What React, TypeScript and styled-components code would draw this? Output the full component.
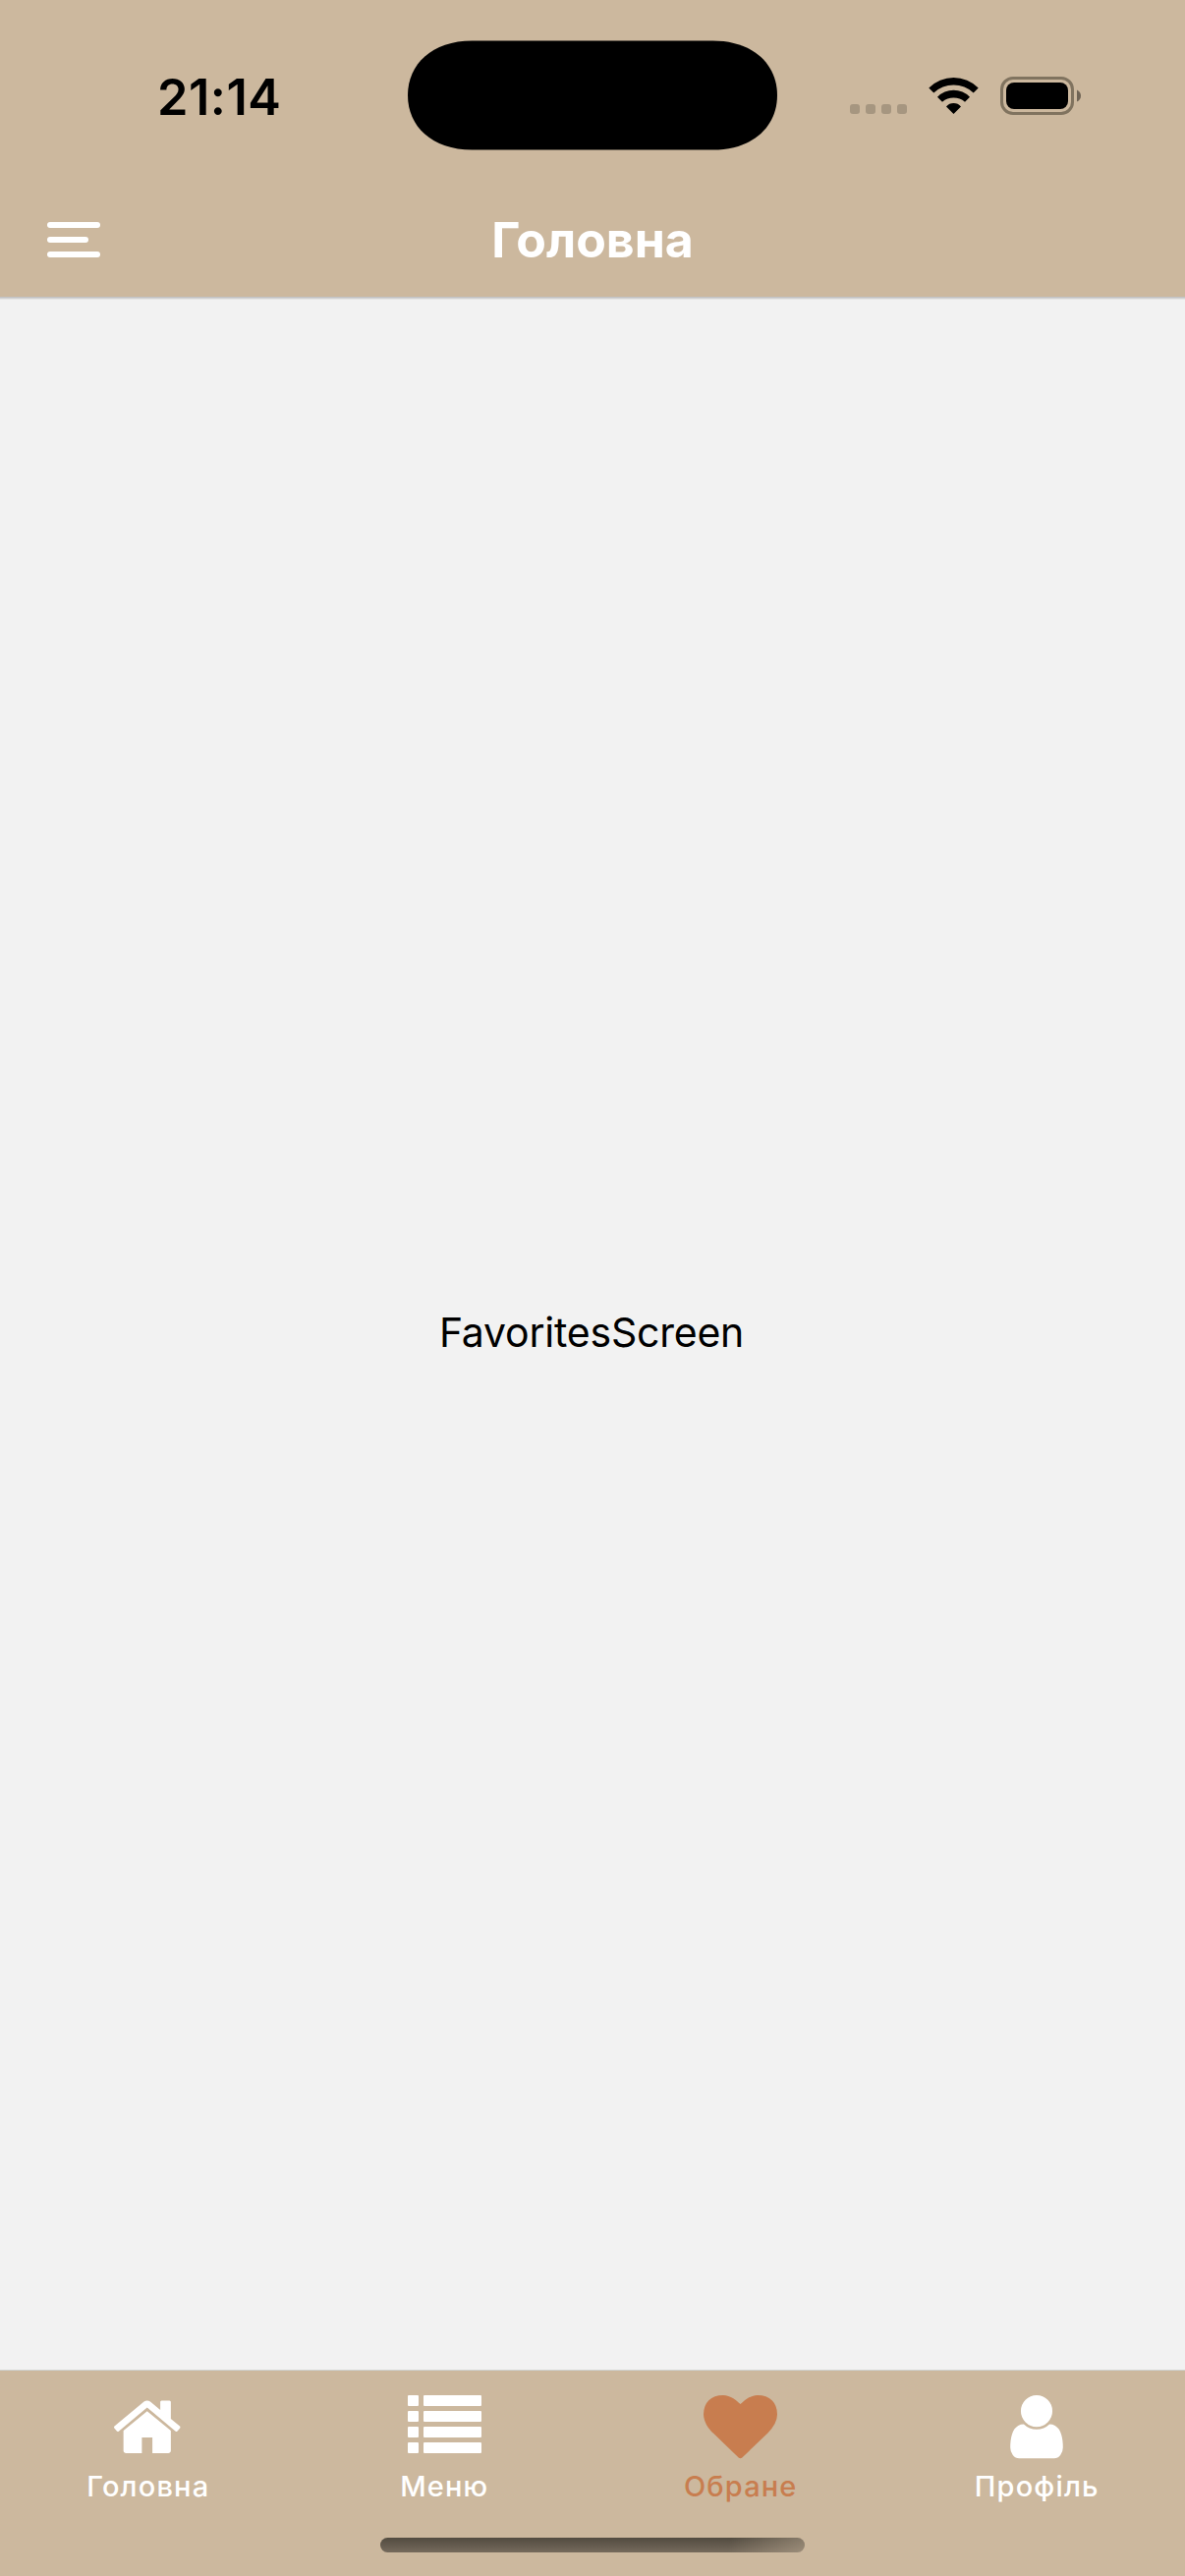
import React from 'react';
import styled, { createGlobalStyle } from 'styled-components';

const SAND = '#ccb89e';
const ACCENT = '#c87d4f';

const GlobalStyle = createGlobalStyle`
  * { box-sizing: border-box; }
  body { margin: 0; background: #f2f2f2; }
`;

const Screen = styled.div`
  display: flex;
  flex-direction: column;
  width: 1206px;
  height: 2622px;
  overflow: hidden;
  background: #f2f2f2;
  font-family: Inter, 'Liberation Sans', sans-serif;
`;

const Header = styled.header`
  flex: none;
  height: 302px;
  background: ${SAND};
  box-shadow: 0 1px 0 #c2c2c3, 0 2px 0 #d0d0d0, 0 3px 0 #e4e4e4;
`;

const StatusBar = styled.div`
  display: grid;
  grid-template-columns: 414px 378px 1fr;
  height: 186px;
  padding-top: 41px;
`;

const Clock = styled.time`
  padding: 27px 0 0 160px;
  font-size: 50.5px;
  line-height: 61px;
  font-weight: 600;
  letter-spacing: 0.5px;
  color: #000;
`;

const Island = styled.div`
  height: 112px;
`;

const Indicators = styled.div`
  padding: 37px 0 0 73px;
`;

const NavBar = styled.div`
  display: grid;
  grid-template-columns: 1fr auto 1fr;
  align-items: center;
  height: 116px;
  padding: 0 48px;
`;

const MenuButton = styled.button`
  display: flex;
  flex-direction: column;
  gap: 9px;
  width: 54px;
  padding: 0;
  border: 0;
  background: none;
`;

const MenuLine = styled.span<{ $width: number }>`
  width: ${(p) => p.$width}px;
  height: 6px;
  border-radius: 3px;
  background: #fff;
`;

const Title = styled.h1`
  margin: 0;
  font-size: 50px;
  line-height: 60px;
  font-weight: 700;
  color: #fff;
`;

const Content = styled.main`
  flex: 1;
  display: flex;
  align-items: center;
  justify-content: center;
  padding: 0 2px 2px 0;
  font-size: 41px;
  line-height: 50px;
  letter-spacing: -0.22px;
  color: #000;
`;

const Footer = styled.footer`
  flex: none;
  display: flex;
  flex-direction: column;
  align-items: center;
  height: 210px;
  border-top: 1px solid #cfd1d0;
  background: ${SAND};
`;

const Tabs = styled.nav`
  display: grid;
  grid-template-columns: repeat(4, 1fr);
  width: 100%;
  height: 170px;
`;

const Tab = styled.a<{ $active?: boolean }>`
  display: flex;
  flex-direction: column;
  align-items: center;
  padding-top: 18px;
  color: ${(p) => (p.$active ? ACCENT : '#fff')};
`;

const TabIcon = styled.svg`
  display: block;
  width: 75px;
  height: 75px;
  fill: currentColor;
`;

const TabLabel = styled.span`
  margin-top: 6px;
  font-size: 29px;
  line-height: 37px;
  font-weight: 450;
  letter-spacing: 1.15px;
  white-space: nowrap;
`;

const HomeIndicator = styled.div`
  width: 432px;
  height: 15px;
  border-radius: 7.5px;
  background: linear-gradient(100deg, transparent 82%, rgba(204, 184, 158, 0.45) 100%),
    linear-gradient(#524b40, #756a5c);
`;

const tabs = [
  {
    label: 'Головна',
    box: '-46 -43 1792 1792',
    path: 'M1408 992v480q0 26-19 45t-45 19h-384v-384h-256v384h-384q-26 0-45-19t-19-45v-480q0-1 .5-3t.5-3l575-474 575 474q1 2 1 6zm223-69l-62 74q-8 9-21 11h-3q-13 0-21-7l-692-577-692 577q-12 8-24 7-13-2-21-11l-62-74q-8-10-7-23.5t11-21.5l719-599q32-26 76-26t76 26l244 204v-195q0-14 9-23t23-9h192q14 0 23 9t9 23v408l219 182q10 8 11 21.5t-7 23.5z',
  },
  {
    label: 'Меню',
    box: '0 0 75 75',
    path: [7, 23, 39, 55]
      .map(
        (y) =>
          `M1 ${y}h9q1 0 1 1v9q0 1-1 1h-9q-1 0-1-1v-9q0-1 1-1zM17 ${y}h57q1 0 1 1v9q0 1-1 1h-57q-1 0-1-1v-9q0-1 1-1z`,
      )
      .join(''),
  },
  {
    label: 'Обране',
    active: true,
    box: '0 -39 1792 1792',
    path: 'M896 1664q-26 0-44-18l-624-602q-10-8-27.5-26t-55.5-65.5-68-97.5-53.5-121-23.5-138q0-220 127-344t351-124q62 0 126.5 21.5t120 58 95.5 68.5 76 68q36-36 76-68t95.5-68.5 120-58 126.5-21.5q224 0 351 124t127 344q0 221-229 450l-623 600q-18 18-44 18z',
  },
  {
    label: 'Профіль',
    box: '-244 -167 1792 1792',
    path: 'M1280 1271q0 109-62.5 187t-150.5 78h-854q-88 0-150.5-78t-62.5-187q0-85 8.5-160.5t31.5-152 58.5-131 94-89 134.5-34.5q131 128 313 128t313-128q76 0 134.5 34.5t94 89 58.5 131 31.5 152 8.5 160.5zm-256-887q0 159-112.5 271.5t-271.5 112.5-271.5-112.5-112.5-271.5 112.5-271.5 271.5-112.5 271.5 112.5 112.5 271.5z',
  },
];

export default function App() {
  return (
    <Screen>
      <GlobalStyle />
      <Header>
        <StatusBar>
          <Clock>21:14</Clock>
          <Island>
            <svg width="378" height="112" viewBox="-0.5 -0.5 378 112" display="block">
              <path d="M66 0H311C352 0 376.5 24 376.5 55.5S352 111 311 111H66C25 111 0.5 87 0.5 55.5S25 0 66 0z" />
            </svg>
          </Island>
          <Indicators>
            <svg width="236" height="39" viewBox="0 0 236 39" display="block">
              {[0, 16, 32, 48].map((x) => (
                <rect key={x} x={x} y="28" width="10" height="10" rx="3" fill="#a69680" />
              ))}
              <path d="M80.3 11.5a35.5 35.5 0 0 1 50.4 0l-5 5a29.5 29.5 0 0 0-40.4 0z" />
              <path d="M89 20.7a22.9 22.9 0 0 1 33 0l-5 5a17.8 17.8 0 0 0-23 0z" />
              <path d="M98 30.5a10 10 0 0 1 15 0L105.5 38z" />
              <rect x="154.5" y="1.5" width="72" height="36" rx="11.5" fill="none" stroke="#80735f" strokeWidth="3" />
              <rect x="159" y="6" width="63" height="27" rx="8" />
              <path d="M231 13.5q4 2 4 6t-4 6z" fill="#6f6455" />
            </svg>
          </Indicators>
        </StatusBar>
        <NavBar>
          <MenuButton aria-label="Меню">
            <MenuLine $width={54} />
            <MenuLine $width={42} />
            <MenuLine $width={54} />
          </MenuButton>
          <Title>Головна</Title>
        </NavBar>
      </Header>
      <Content>FavoritesScreen</Content>
      <Footer>
        <Tabs>
          {tabs.map((t) => (
            <Tab key={t.label} $active={t.active}>
              <TabIcon viewBox={t.box}>
                <path d={t.path} />
              </TabIcon>
              <TabLabel>{t.label}</TabLabel>
            </Tab>
          ))}
        </Tabs>
        <HomeIndicator />
      </Footer>
    </Screen>
  );
}
